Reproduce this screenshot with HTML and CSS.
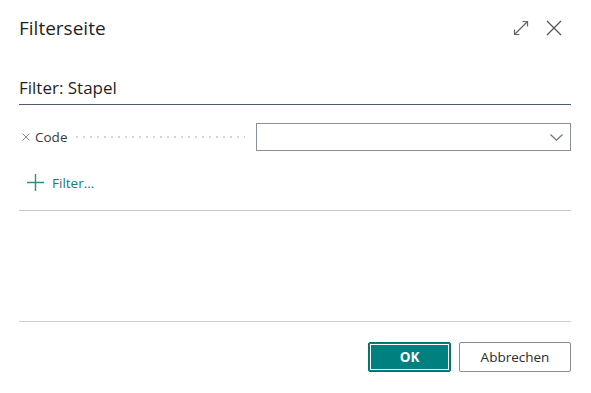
FILE: index.html
```html
<!DOCTYPE html>
<html lang="de">
<head>
<meta charset="utf-8">
<title>Filterseite</title>
<link rel="stylesheet" href="styles.css">
</head>
<body>
<div class="dialog">
  <div class="header">
    <h1 class="title">Filterseite</h1>
    <div class="header-actions">
      <button class="icon-btn" aria-label="Maximieren">
        <svg width="16" height="16" viewBox="0 0 16 16" fill="none" stroke="#666" stroke-width="1.2">
          <path d="M1.5 14.5 L14.5 1.5"/>
          <path d="M9.5 1.5 H14.5 V6.5"/>
          <path d="M1.5 9.5 V14.5 H6.5"/>
        </svg>
      </button>
      <button class="icon-btn" aria-label="Schließen">
        <svg width="16" height="16" viewBox="0 0 16 16" fill="none" stroke="#555" stroke-width="1.3">
          <path d="M1 1 L15 15 M15 1 L1 15"/>
        </svg>
      </button>
    </div>
  </div>

  <h2 class="section-title">Filter: Stapel</h2>

  <div class="filter-row">
    <div class="filter-label">
      <svg class="remove" width="8" height="8" viewBox="0 0 8 8" fill="none" stroke="#8c8c8c" stroke-width="1">
        <path d="M0.5 0.5 L7.5 7.5 M7.5 0.5 L0.5 7.5"/>
      </svg>
      <span class="label-text">Code</span>
      <span class="leader"></span>
    </div>
    <div class="select">
      <svg class="chevron" width="13" height="7" viewBox="0 0 13 7" fill="none" stroke="#6a7686" stroke-width="1.2">
        <path d="M0.5 0.5 L6.5 6.2 L12.5 0.5"/>
      </svg>
    </div>
  </div>

  <div class="add-filter">
    <svg width="17" height="17" viewBox="0 0 17 17" fill="none" stroke="#2b8f8c" stroke-width="1.4">
      <path d="M8.5 0 V17 M0 8.5 H17"/>
    </svg>
    <span class="add-text">Filter...</span>
  </div>

  <div class="rule rule-top"></div>
  <div class="rule rule-bottom"></div>

  <div class="footer">
    <button class="btn btn-primary">OK</button>
    <button class="btn btn-secondary">Abbrechen</button>
  </div>
</div>
</body>
</html>
```

FILE: styles.css
```css
* { box-sizing: border-box; }

html, body {
  margin: 0;
  padding: 0;
  background: #ffffff;
}

body {
  font-family: "Open Sans", "Noto Sans", sans-serif;
  color: #212121;
}

.dialog {
  width: 591px;
  height: 393px;
  padding: 0 20px 0 19px;
}

.header {
  display: flex;
  justify-content: space-between;
  align-items: flex-start;
  padding-top: 15px;
}

.title {
  margin: 0;
  font-size: 19px;
  line-height: 26px;
  font-weight: 400;
  color: #1f1f1f;
}

.header-actions {
  display: flex;
  gap: 17px;
  padding-top: 5px;
  margin-right: 9px;
}

.icon-btn {
  border: 0;
  padding: 0;
  background: none;
  width: 16px;
  height: 16px;
  display: block;
}

.icon-btn svg { display: block; }

.section-title {
  margin: 35px 0 0 0;
  font-size: 17px;
  line-height: 24px;
  font-weight: 400;
  color: #1f1f1f;
  padding-bottom: 4px;
  border-bottom: 1px solid #505c6d;
}

.filter-row {
  display: flex;
  align-items: center;
  margin-top: 18px;
  height: 28px;
}

.filter-label {
  flex: 1;
  display: flex;
  align-items: center;
  padding-left: 3px;
  padding-right: 11px;
}

.remove { display: block; flex: none; }

.label-text {
  margin-left: 5px;
  font-size: 13.5px;
  line-height: 20px;
  color: #3a3a3a;
}

.leader {
  flex: 1;
  height: 2px;
  margin-left: 9px;
  background-image: linear-gradient(to right, #d6d6d6 2px, transparent 2px);
  background-size: 7px 2px;
  background-repeat: repeat-x;
}

.select {
  width: 315px;
  height: 28px;
  border: 1px solid #8a9098;
  display: flex;
  align-items: center;
  justify-content: flex-end;
  padding-right: 7px;
}

.chevron { display: block; }

.add-filter {
  display: flex;
  align-items: center;
  height: 33px;
  margin-top: 15px;
  padding-left: 8px;
}

.add-filter svg { display: block; }

.add-text {
  margin-left: 8px;
  font-size: 13.5px;
  line-height: 20px;
  color: #137d7a;
}

.rule {
  height: 1px;
  background: #c6c6c6;
}

.rule-top { margin-top: 11px; }
.rule-bottom { margin-top: 110px; background: #cfcfcf; }

.footer {
  display: flex;
  justify-content: flex-end;
  gap: 8px;
  padding-top: 20px;
}

.btn {
  height: 30px;
  font-family: "Open Sans", "Noto Sans", sans-serif;
  font-size: 13.5px;
  border-radius: 2px;
  padding: 0;
  cursor: pointer;
}

.btn-primary {
  width: 83px;
  background: #00817f;
  color: #ffffff;
  font-weight: 700;
  border: 1px solid #00706e;
  box-shadow: inset 0 0 0 1px #00817f, inset 0 0 0 2px #ffffff;
}

.btn-secondary {
  width: 112px;
  background: #ffffff;
  color: #2b2b2b;
  border: 1px solid #8a8a8a;
}
```
